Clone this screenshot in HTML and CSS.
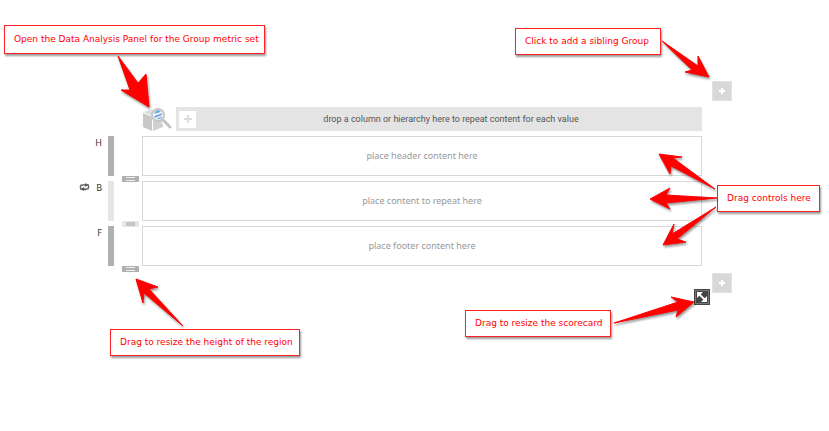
FILE: index.html
```html
<!DOCTYPE html>
<html lang="en">
<head>
  <meta charset="UTF-8" />
  <meta name="viewport" content="width=device-width, initial-scale=1.0"/>
  <title>Scorecard</title>
  <link rel="stylesheet" href="styles.css">
</head>
<body>

  <main class="scorecard">
    <div class="add-row">
      <button class="add-group" type="button" aria-label="Add group above">
        <svg width="8" height="8" viewBox="0 0 8 8"><path d="M4 1v6M1 4h6" stroke="#fff" stroke-width="2"/></svg>
      </button>
    </div>

    <div class="group-header">
      <button class="analysis" type="button" aria-label="Data Analysis Panel">
        <svg width="30" height="24" viewBox="0 0 30 24">
          <path d="M1 6l9 4v14l-9-4z" fill="#c8c8c8"/>
          <path d="M11 10l10-2v12l-10 4z" fill="#d0d0d0"/>
          <path d="M1 5l7-2 7 1-1 4-4 1z" fill="#dedede"/>
          <path d="M21 14l7 7" stroke="#fff" stroke-width="5"/>
          <path d="M20 12l8 8" stroke="#c4c4c4" stroke-width="3" stroke-linecap="round"/>
          <circle cx="16" cy="8" r="6" fill="#fff" stroke="#c4c4c4" stroke-width="2"/>
          <path d="M12 7q1-4 5-4l2 2zM12 9l8-3v2l-7 3zM14 12l6-3q-1 4-6 3z" fill="#74abe0"/>
        </svg>
      </button>
      <div class="group-bar">
        <button class="add-level" type="button" aria-label="Add hierarchy">
          <svg width="8" height="8" viewBox="0 0 8 8"><path d="M4 0v8M0 4h8" stroke="#dcdcdc" stroke-width="2"/></svg>
        </button>
        <span class="group-hint">drop a column or hierarchy here to repeat content for each value</span>
      </div>
    </div>

    <section class="region">
      <div class="region-label">H</div>
      <div class="region-bar"></div>
      <button class="handle" type="button" aria-label="Resize header"></button>
      <div class="drop-zone">place header content here</div>
    </section>

    <section class="region body">
      <div class="region-label">
        <svg class="repeat" width="11" height="8" viewBox="0 0 11 8">
          <path d="M7 6.500H3Q1.500 6.500 1.500 5V3Q1.500 2 3 2h4M4 6h4q1.500 0 1.500-1.500V3Q9.500 1.500 8 1.500" fill="none" stroke="#666" stroke-width="1.500"/>
          <path d="M6 0l3 2-3 2zM5 4L2 6l3 2z" fill="#555"/>
        </svg>
        B
      </div>
      <div class="region-bar"></div>
      <button class="handle" type="button" aria-label="Resize body"></button>
      <div class="drop-zone">place content to repeat here</div>
    </section>

    <section class="region">
      <div class="region-label">F</div>
      <div class="region-bar"></div>
      <button class="handle" type="button" aria-label="Resize footer"></button>
      <div class="drop-zone">place footer content here</div>
    </section>

    <div class="add-row bottom">
      <button class="add-group" type="button" aria-label="Add group below">
        <svg width="8" height="8" viewBox="0 0 8 8"><path d="M4 1v6M1 4h6" stroke="#fff" stroke-width="2"/></svg>
      </button>
      <button class="resize" type="button" aria-label="Resize scorecard">
        <svg width="16" height="16" viewBox="0 0 16 16">
          <rect x="1.500" y="1.500" width="13" height="13" fill="#444" stroke="#777"/>
          <path d="M5 5l6 6" stroke="#fff" stroke-width="2"/>
          <path d="M3 3h6L3 9zM13 13H7l6-6z" fill="#fff"/>
        </svg>
      </button>
    </div>
  </main>

  <!-- callouts, each arrow is drawn from the corner of its own box -->
  <div class="callout analysis-note">
    Open the Data Analysis Panel for the Group metric set
    <svg class="arrow" width="1" height="1"><path d="M114 31L134 58L142 49L145 82L117 65L126 65z"/></svg>
  </div>

  <div class="callout sibling-note">
    Click to add a sibling Group
    <svg class="arrow" width="1" height="1"><path d="M147 13L183 38L183 28L194 49L170 44L177 42z"/></svg>
  </div>

  <div class="callout controls-note">
    Drag controls here
    <svg class="arrow" width="1" height="1">
      <path d="M-2 4L-44 -27L-35 -28L-58 -31L-47 -11L-46 -19z"/>
      <path d="M0 13L-51 10L-47 3L-67 14L-47 24L-51 18z"/>
      <path d="M-1 22L-45 49L-43 39L-54 60L-31 57L-40 54z"/>
    </svg>
  </div>

  <div class="callout resize-note">
    Drag to resize the scorecard
    <svg class="arrow" width="1" height="1"><path d="M149 13L213 -8L206 -13L229 -8L211 7L213 0z"/></svg>
  </div>

  <div class="callout height-note">
    Drag to resize the height of the region
    <svg class="arrow" width="1" height="1"><path d="M73 -3L39 -40L48 -42L26 -50L33 -26L34 -36z"/></svg>
  </div>

</body>
</html>
```

FILE: styles.css
```css
body {
  margin: 0;
  position: relative;
  min-height: 100vh;
  background: #fff;
  color: #333;
  font-family: "Noto Sans", sans-serif;
  font-size: 9px;
}

button {
  display: flex;
  justify-content: center;
  align-items: center;
  padding: 0;
  border: none;
  background: none;
  cursor: pointer;
}

.scorecard {
  padding: 81px 97px 0 76px;
}

.add-row {
  display: flex;
  justify-content: flex-end;
  position: relative;
  margin-bottom: 6px;
}

.add-row.bottom {
  margin-top: 7px;
}

.add-group {
  width: 20px;
  height: 20px;
  background: #d8d8d8;
  border: 1px solid #e2e2e2;
}

.group-header {
  display: flex;
  gap: 4px;
  margin: 0 30px 5px 66px;
}

.group-bar {
  flex: 1;
  display: flex;
  align-items: center;
  gap: 4px;
  height: 24px;
  padding-left: 3px;
  background: #e4e4e4;
}

.add-level {
  width: 17px;
  height: 17px;
  background: #fff;
}

.group-hint {
  flex: 1;
  text-align: center;
  color: #555;
  font-family: Roboto, sans-serif;
}

.region {
  display: flex;
  position: relative;
  margin: 0 30px 5px 0;
  height: 40px;
}

.region-label {
  display: flex;
  justify-content: flex-end;
  gap: 6px;
  width: 26px;
  margin-right: 6px;
  line-height: 14px;
}

.repeat {
  margin-top: 2px;
}

.region-bar {
  width: 6px;
  margin-right: 28px;
  background: #b0b0b0;
}

/* grip under each region, sits in the gap between rows */
.handle {
  position: absolute;
  left: 46px;
  top: 40px;
  width: 17px;
  height: 6px;
  background: #b0b0b0;
}

.handle::before {
  content: "";
  width: 9px;
  height: 2px;
  border-top: 1px solid #f0f0f0;
  border-bottom: 1px solid #f0f0f0;
}

.body .region-bar,
.body .handle {
  background: #e4e6e8;
}

.body .handle::before {
  border: none;
  height: 4px;
  background: #c4c6c6;
}

.drop-zone {
  flex: 1;
  display: flex;
  justify-content: center;
  align-items: center;
  padding-bottom: 2px;
  border: 1px solid #d8d8d8;
  color: #999;
}

.resize {
  position: absolute;
  right: 22px;
  top: 16px;
  width: 16px;
  height: 16px;
  background: #444;
}

.callout {
  position: absolute;
  box-sizing: border-box;
  padding: 0 9px;
  border: 1px solid #f22;
  background: #fff;
  box-shadow: 1px 2px 2px rgba(0, 0, 0, 0.4);
  color: #f00;
  font-family: "DejaVu Sans", sans-serif;
  font-size: 9px;
  line-height: 25px;
  white-space: nowrap;
}

.arrow {
  position: absolute;
  left: -1px;
  top: -1px;
  overflow: visible;
  fill: #f00;
  stroke: #f00;
  filter: drop-shadow(1px 2px 1px rgba(0, 0, 0, 0.4));
}

.analysis-note {
  left: 4px;
  top: 25px;
  width: 261px;
  line-height: 27px;
}

.sibling-note {
  right: 168px;
  top: 28px;
  width: 146px;
}

.controls-note {
  right: 9px;
  top: 185px;
  width: 103px;
}

.resize-note {
  right: 218px;
  top: 310px;
  width: 146px;
}

.height-note {
  left: 110px;
  top: 329px;
  width: 190px;
}
```
